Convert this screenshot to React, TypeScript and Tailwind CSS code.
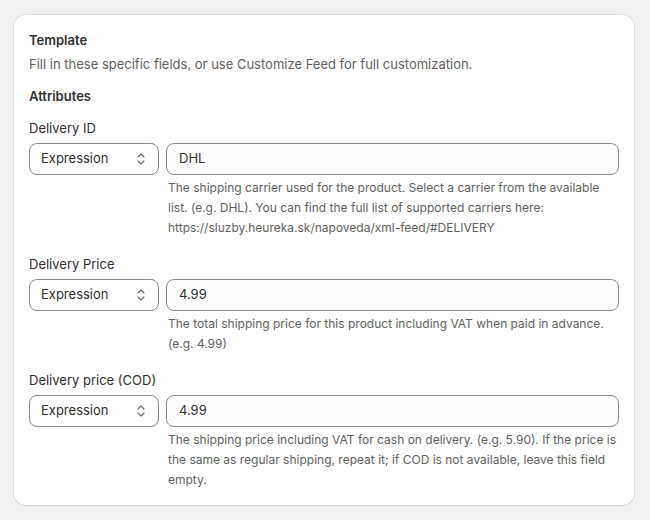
import React from 'react';

interface FieldProps {
  label: string;
  value: string;
  help: string;
}

const SelectIcon = () => (
  <svg width="10" height="16" viewBox="0 0 10 16" fill="none" className="text-[#6b6b6b]">
    <path d="M2 6 5 3 8 6" stroke="currentColor" strokeWidth="1.1" strokeLinecap="round" strokeLinejoin="round" />
    <path d="M2 10 5 13 8 10" stroke="currentColor" strokeWidth="1.1" strokeLinecap="round" strokeLinejoin="round" />
  </svg>
);

const Field: React.FC<FieldProps> = ({ label, value, help }) => (
  <div className="flex flex-col">
    <label className="text-[13px] leading-5 text-[#303030]">{label}</label>
    <div className="mt-[5px] flex gap-[7px]">
      {/* Source type select */}
      <div className="flex h-8 w-[130px] shrink-0 items-center justify-between rounded-lg border border-[#8a8a8a] bg-white pl-[11px] pr-[12px] text-[13px] text-[#303030]">
        <span>Expression</span>
        <SelectIcon />
      </div>
      <div className="flex flex-1 flex-col">
        <div className="flex h-8 items-center rounded-lg border border-[#8a8a8a] bg-[#fdfdfd] px-3 text-[13px] text-[#303030]">
          {value}
        </div>
        <p className="mt-[3px] pl-[2px] text-[12px] leading-5 text-[#616161]">{help}</p>
      </div>
    </div>
  </div>
);

const fields: FieldProps[] = [
  {
    label: 'Delivery ID',
    value: 'DHL',
    help: 'The shipping carrier used for the product. Select a carrier from the available list. (e.g. DHL). You can find the full list of supported carriers here: https://sluzby.heureka.sk/napoveda/xml-feed/#DELIVERY',
  },
  {
    label: 'Delivery Price',
    value: '4.99',
    help: 'The total shipping price for this product including VAT when paid in advance. (e.g. 4.99)',
  },
  {
    label: 'Delivery price (COD)',
    value: '4.99',
    help: 'The shipping price including VAT for cash on delivery. (e.g. 5.90). If the price is the same as regular shipping, repeat it; if COD is not available, leave this field empty.',
  },
];

export default function App() {
  return (
    <div className="min-h-[520px] bg-[#f1f1f1] pl-[14px] pr-4 pt-[15px] font-['Inter',sans-serif]">
      <div className="w-[620px] rounded-xl bg-white px-[15px] pb-[15px] pt-[15px] shadow-[0_1px_0_0_rgba(26,26,26,0.07),0_0_0_1px_rgba(0,0,0,0.07)]">
        <h2 className="text-[13px] font-semibold leading-5 text-[#303030]">Template</h2>
        <p className="mt-1 text-[13px] leading-5 text-[#616161]">
          Fill in these specific fields, or use Customize Feed for full customization.
        </p>
        <h3 className="mt-3 text-[13px] font-semibold leading-5 text-[#303030]">Attributes</h3>
        <div className="mt-3 flex flex-col gap-4">
          {fields.map((f) => (
            <Field key={f.label} {...f} />
          ))}
        </div>
      </div>
    </div>
  );
}
